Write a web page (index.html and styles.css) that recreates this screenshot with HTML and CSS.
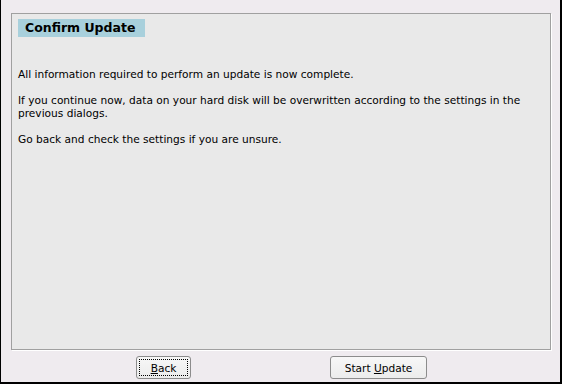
FILE: index.html
```html
<!DOCTYPE html>
<html>
<head>
<meta charset="utf-8">
<link rel="stylesheet" href="styles.css">
</head>
<body>
<div class="window">
  <div class="panel">
    <div class="title">Confirm Update</div>
    <div class="content">
      <p>All information required to perform an update is now complete.</p>
      <p>If you continue now, data on your hard disk will be overwritten according to the settings in the previous dialogs.</p>
      <p>Go back and check the settings if you are unsure.</p>
    </div>
  </div>
  <div class="buttons">
    <button class="btn btn-back focused"><span class="focus"><span><u>B</u>ack</span></span></button>
    <button class="btn btn-start"><span>Start <u>U</u>pdate</span></button>
  </div>
</div>
</body>
</html>
```

FILE: styles.css
```css
html, body {
  margin: 0;
  padding: 0;
}
body {
  width: 562px;
  height: 384px;
  overflow: hidden;
  font-family: "DejaVu Sans", sans-serif;
  font-size: 10.6px;
  color: #000;
}
.window {
  box-sizing: border-box;
  width: 562px;
  height: 384px;
  background: #efebef;
  border-left: 1px solid #000;
  border-right: 2px solid #000;
  border-bottom: 2px solid #000;
  padding: 13px 9px 0 10px;
  display: flex;
  flex-direction: column;
}
.panel {
  box-sizing: border-box;
  height: 337px;
  background: #e9e9e9;
  border: 1px solid #a0a0a0;
  box-shadow: 1px 1px 0 #ffffff;
  padding: 5px 6px;
}
.title {
  display: block;
  box-sizing: border-box;
  width: 127px;
  white-space: nowrap;
  background: #a8d0dc;
  font-weight: bold;
  font-size: 12.5px;
  line-height: 18px;
  height: 18px;
  padding: 0 0 0 7px;
}
.content {
  padding-top: 31px;
}
.content p {
  margin: 0 0 13px 0;
  line-height: 13px;
}
.buttons {
  display: flex;
  padding: 6px 0 0 125px;
  gap: 139px;
}
.btn {
  box-sizing: border-box;
  height: 23px;
  border: 1px solid #8c8c8c;
  border-radius: 3px;
  background: linear-gradient(#f7f7f7, #ececec);
  font-family: "DejaVu Sans", sans-serif;
  font-size: 10.6px;
  color: #000;
  padding: 0;
  display: flex;
  align-items: center;
  justify-content: center;
}
.btn-back {
  width: 55px;
  padding: 2px;
}
.focus {
  box-sizing: border-box;
  width: 100%;
  height: 100%;
  border: 1px dotted #000;
  display: flex;
  align-items: center;
  justify-content: center;
}
.btn-start {
  width: 97px;
}
u {
  text-decoration: underline;
  text-underline-offset: 1px;
}
```
